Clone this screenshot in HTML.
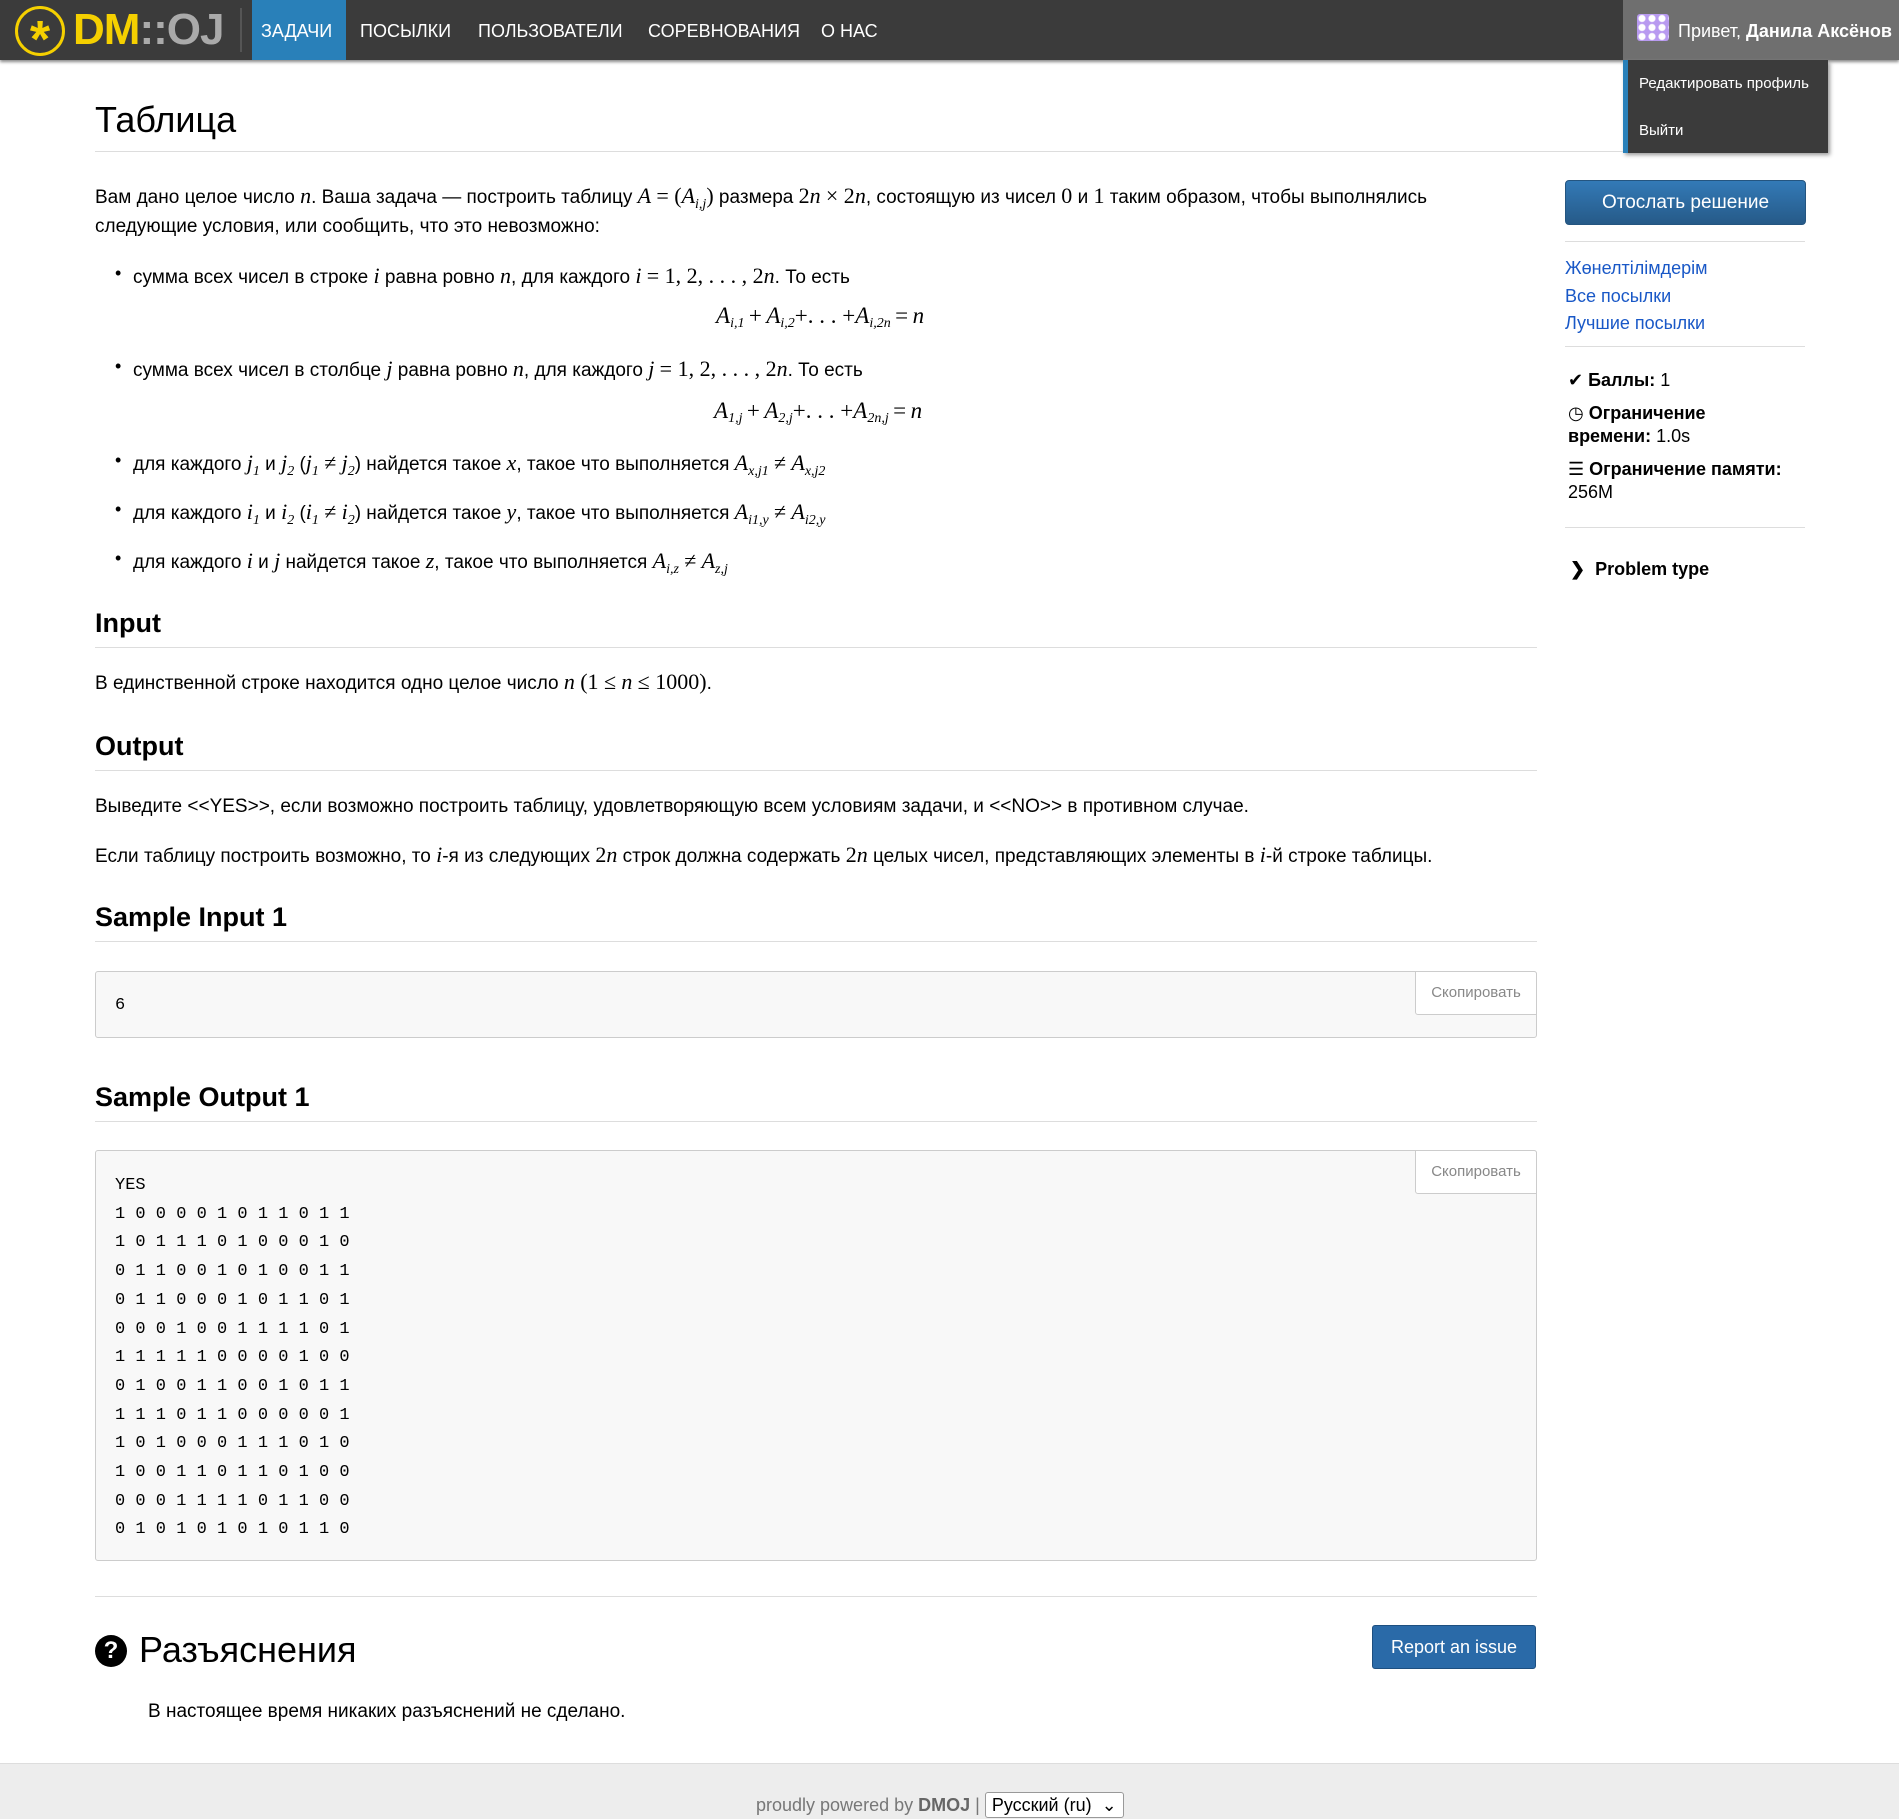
<!DOCTYPE html>
<html><head><meta charset="utf-8">
<style>
*{margin:0;padding:0;box-sizing:border-box}
body{width:1899px;height:1819px;position:relative;background:#fff;font-family:"Liberation Sans",sans-serif;color:#000;overflow:hidden}
.a{position:absolute;white-space:nowrap}
.t{font-size:19px;line-height:22px}
.m{font-family:"Liberation Serif",serif;font-style:italic;font-size:22px}
.r{font-family:"Liberation Serif",serif;font-size:22px}
sub{font-size:14px;font-family:"Liberation Serif",serif;font-style:italic}
.f .m,.f .r{font-size:23px}
.hr{position:absolute;height:1px;background:#ddd}
h2{position:absolute;font-size:27px;font-weight:bold;white-space:nowrap}
.pre{position:absolute;left:95px;width:1442px;background:#f8f8f8;border:1px solid #ccc;border-radius:3px;font-family:"Liberation Mono",monospace;font-size:17px;line-height:28.7px;padding:18px 19px;white-space:pre}
.copy{position:absolute;right:-1px;top:-1px;width:122px;height:44px;border:1px solid #ccc;background:#fff;color:#888;font-family:"Liberation Sans",sans-serif;font-size:15px;line-height:42px;text-align:center;border-radius:0 3px 0 3px}
.li{position:absolute;left:115px;font-size:19px;white-space:nowrap}
.li:before{content:"•";position:absolute;left:0;font-size:18px}
.li span.x{margin-left:18px}
.side a{color:#1958c7;text-decoration:none}
.nav{font-size:18px;color:#fff;line-height:22px;top:20px}
</style></head><body>
<!-- navbar -->
<div class="a" style="left:0;top:0;width:1899px;height:60px;background:#3b3b3b;box-shadow:0 2px 3px #888"></div>
<div class="a" style="left:15px;top:6px;width:50px;height:50px;border:3px solid #f5d000;border-radius:50%;color:#f5d000;font-size:52px;font-weight:bold;text-align:center;line-height:62px">*</div>
<div class="a" style="left:73px;top:3px;font-size:44px;font-weight:bold;letter-spacing:-1px;line-height:54px"><span style="color:#f5d000">DM</span><span style="color:#aaa">::OJ</span></div>
<div class="a" style="left:240px;top:8px;width:2px;height:44px;background:#555"></div>
<div class="a" style="left:252px;top:0;width:94px;height:60px;background:#2980b9"></div>
<div class="a nav" style="left:261px">ЗАДАЧИ</div>
<div class="a nav" style="left:360px">ПОСЫЛКИ</div>
<div class="a nav" style="left:478px">ПОЛЬЗОВАТЕЛИ</div>
<div class="a nav" style="left:648px">СОРЕВНОВАНИЯ</div>
<div class="a nav" style="left:821px">О НАС</div>
<div class="a" style="left:1623px;top:0;width:276px;height:60px;background:#6f6f6f"></div>
<div class="a" style="left:1637px;top:14px;width:32px;height:27px;background:#b89af0;border-radius:3px;background-image:radial-gradient(circle,#fff 3px,transparent 4px);background-size:10px 9px"></div>
<div class="a" style="left:1678px;top:20px;font-size:18px;color:#fff;line-height:22px">Привет, <b>Данила Аксёнов</b></div>
<div class="a" style="left:1623px;top:60px;width:205px;height:93px;background:#3b3b3b;border-left:5px solid #2980b9;box-shadow:2px 2px 4px #999"></div>
<div class="a" style="left:1639px;top:75px;font-size:15px;color:#fff">Редактировать профиль</div>
<div class="a" style="left:1639px;top:122px;font-size:15px;color:#fff">Выйти</div>
<!-- title -->
<div class="a" style="left:95px;top:98px;font-size:36px;line-height:44px">Таблица</div>
<div class="hr" style="left:95px;top:151px;width:1528px"></div>
<!-- statement -->
<div class="a t" style="left:95px;top:185px">Вам дано целое число <span class="m">n</span>. Ваша задача — построить таблицу <span class="m">A</span> <span class="r">= (</span><span class="m">A</span><sub>i,j</sub><span class="r">)</span> размера <span class="r">2</span><span class="m">n</span> <span class="r">× 2</span><span class="m">n</span>, состоящую из чисел <span class="r">0</span> и <span class="r">1</span> таким образом, чтобы выполнялись</div>
<div class="a t" style="left:95px;top:216px">следующие условия, или сообщить, что это невозможно:</div>
<div class="li" style="top:263px"><span class="x">сумма всех чисел в строке <span class="m">i</span> равна ровно <span class="m">n</span>, для каждого <span class="m">i</span> <span class="r">= 1, 2, . . . , 2</span><span class="m">n</span>. То есть</span></div>
<div class="a f" style="left:716px;top:303px"><span class="m">A</span><sub>i,1</sub> <span class="r">+</span> <span class="m">A</span><sub>i,2</sub><span class="r">+. . . +</span><span class="m">A</span><sub>i,2n</sub> <span class="r">=</span> <span class="m">n</span></div>
<div class="li" style="top:356px"><span class="x">сумма всех чисел в столбце <span class="m">j</span> равна ровно <span class="m">n</span>, для каждого <span class="m">j</span> <span class="r">= 1, 2, . . . , 2</span><span class="m">n</span>. То есть</span></div>
<div class="a f" style="left:714px;top:398px"><span class="m">A</span><sub>1,j</sub> <span class="r">+</span> <span class="m">A</span><sub>2,j</sub><span class="r">+. . . +</span><span class="m">A</span><sub>2n,j</sub> <span class="r">=</span> <span class="m">n</span></div>
<div class="li" style="top:450px"><span class="x">для каждого <span class="m">j</span><sub>1</sub> и <span class="m">j</span><sub>2</sub> (<span class="m">j</span><sub>1</sub> <span class="r">≠</span> <span class="m">j</span><sub>2</sub>) найдется такое <span class="m">x</span>, такое что выполняется <span class="m">A</span><sub>x,j1</sub> <span class="r">≠</span> <span class="m">A</span><sub>x,j2</sub></span></div>
<div class="li" style="top:499px"><span class="x">для каждого <span class="m">i</span><sub>1</sub> и <span class="m">i</span><sub>2</sub> (<span class="m">i</span><sub>1</sub> <span class="r">≠</span> <span class="m">i</span><sub>2</sub>) найдется такое <span class="m">y</span>, такое что выполняется <span class="m">A</span><sub>i1,y</sub> <span class="r">≠</span> <span class="m">A</span><sub>i2,y</sub></span></div>
<div class="li" style="top:548px"><span class="x">для каждого <span class="m">i</span> и <span class="m">j</span> найдется такое <span class="m">z</span>, такое что выполняется <span class="m">A</span><sub>i,z</sub> <span class="r">≠</span> <span class="m">A</span><sub>z,j</sub></span></div>
<h2 style="left:95px;top:608px">Input</h2>
<div class="hr" style="left:95px;top:647px;width:1442px"></div>
<div class="a t" style="left:95px;top:671px">В единственной строке находится одно целое число <span class="m">n</span> <span class="r">(1 ≤</span> <span class="m">n</span> <span class="r">≤ 1000)</span>.</div>
<h2 style="left:95px;top:731px">Output</h2>
<div class="hr" style="left:95px;top:770px;width:1442px"></div>
<div class="a t" style="left:95px;top:796px">Выведите &lt;&lt;YES&gt;&gt;, если возможно построить таблицу, удовлетворяющую всем условиям задачи, и &lt;&lt;NO&gt;&gt; в противном случае.</div>
<div class="a t" style="left:95px;top:844px">Если таблицу построить возможно, то <span class="m">i</span>-я из следующих <span class="r">2</span><span class="m">n</span> строк должна содержать <span class="r">2</span><span class="m">n</span> целых чисел, представляющих элементы в <span class="m">i</span>-й строке таблицы.</div>
<h2 style="left:95px;top:902px">Sample Input 1</h2>
<div class="hr" style="left:95px;top:941px;width:1442px"></div>
<div class="pre" style="top:971px;height:67px;padding-top:20px">6<div class="copy">Скопировать</div></div>
<h2 style="left:95px;top:1082px">Sample Output 1</h2>
<div class="hr" style="left:95px;top:1121px;width:1442px"></div>
<div class="pre" style="top:1150px;height:411px;padding-top:21px">YES
1 0 0 0 0 1 0 1 1 0 1 1
1 0 1 1 1 0 1 0 0 0 1 0
0 1 1 0 0 1 0 1 0 0 1 1
0 1 1 0 0 0 1 0 1 1 0 1
0 0 0 1 0 0 1 1 1 1 0 1
1 1 1 1 1 0 0 0 0 1 0 0
0 1 0 0 1 1 0 0 1 0 1 1
1 1 1 0 1 1 0 0 0 0 0 1
1 0 1 0 0 0 1 1 1 0 1 0
1 0 0 1 1 0 1 1 0 1 0 0
0 0 0 1 1 1 1 0 1 1 0 0
0 1 0 1 0 1 0 1 0 1 1 0<div class="copy">Скопировать</div></div>
<div class="hr" style="left:95px;top:1596px;width:1442px"></div>
<div class="a" style="left:95px;top:1635px;width:32px;height:32px;border-radius:50%;background:#000;color:#fff;font-weight:bold;font-size:24px;text-align:center;line-height:32px">?</div>
<div class="a" style="left:139px;top:1628px;font-size:36px;line-height:44px">Разъяснения</div>
<div class="a" style="left:1372px;top:1625px;width:164px;height:44px;background:#2a6aa8;border:1px solid #1d4f80;border-radius:3px;color:#fff;font-size:18px;text-align:center;line-height:42px">Report an issue</div>
<div class="a t" style="left:148px;top:1701px">В настоящее время никаких разъяснений не сделано.</div>
<!-- footer -->
<div class="a" style="left:0;top:1763px;width:1899px;height:56px;background:#ededed;border-top:1px solid #ddd"></div>
<div class="a" style="left:756px;top:1792px;font-size:18px;color:#777">proudly powered by <b style="color:#666">DMOJ</b> | <span style="display:inline-block;border:1px solid #999;background:#fff;color:#000;padding:0 6px;border-radius:3px;font-size:18px;line-height:24px">Русский (ru) &nbsp;⌄</span></div>
<!-- sidebar -->
<div class="a" style="left:1565px;top:180px;width:241px;height:45px;border-radius:4px;background:linear-gradient(#337ab7,#265a88);border:1px solid #245580;color:#fff;font-size:19px;text-align:center;line-height:43px">Отослать решение</div>
<div class="hr" style="left:1565px;top:241px;width:240px"></div>
<div class="a side" style="left:1565px;top:255px;font-size:18px;line-height:27.5px"><a>Жөнелтілімдерім</a><br><a>Все посылки</a><br><a>Лучшие посылки</a></div>
<div class="hr" style="left:1565px;top:346px;width:240px"></div>
<div class="a" style="left:1568px;top:369px;font-size:18px;line-height:22px">✔ <b>Баллы:</b> 1</div>
<div class="a" style="left:1568px;top:402px;font-size:18px;line-height:23px">◷ <b>Ограничение</b><br><b>времени:</b> 1.0s</div>
<div class="a" style="left:1568px;top:458px;font-size:18px;line-height:23px">☰ <b>Ограничение памяти:</b><br>256M</div>
<div class="hr" style="left:1565px;top:527px;width:240px"></div>
<div class="a" style="left:1570px;top:558px;font-size:18px;line-height:22px;font-weight:bold">❯&nbsp; Problem type</div>
</body></html>
